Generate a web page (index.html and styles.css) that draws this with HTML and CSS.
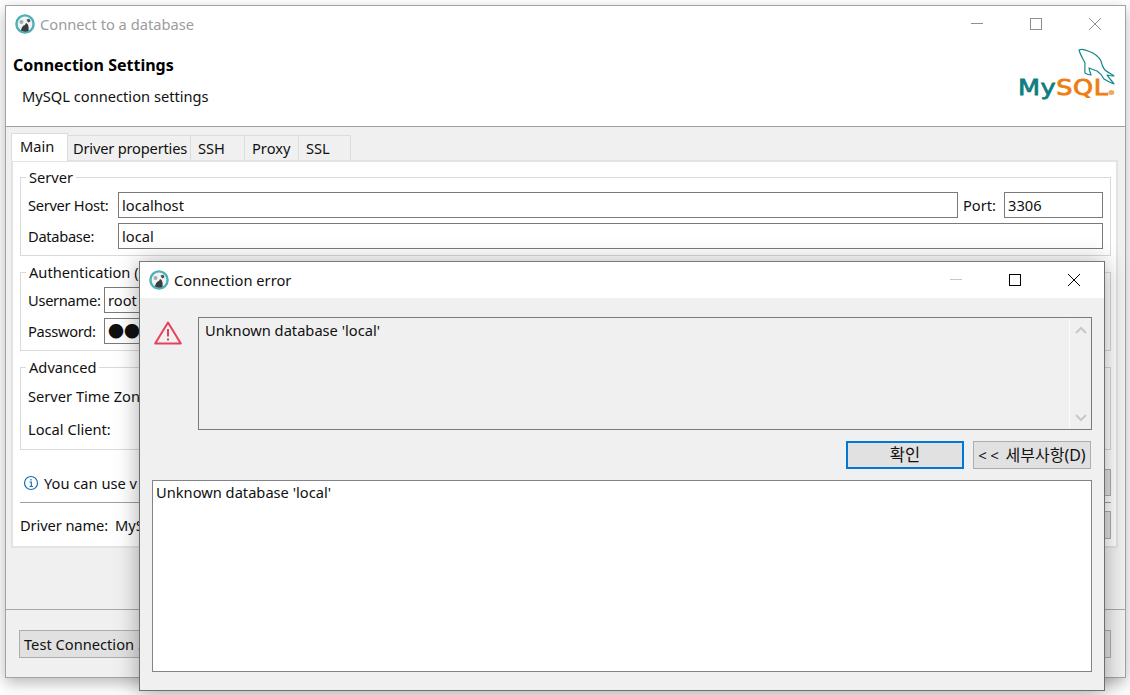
FILE: index.html
```html
<!DOCTYPE html>
<html lang="en">
<head>
<meta charset="utf-8">
<title>Connect to a database</title>
<link rel="stylesheet" href="styles.css">
</head>
<body>
<svg class="defs" width="0" height="0" aria-hidden="true">
  <symbol id="beaver" viewBox="0 0 20 20">
    <circle cx="10" cy="10" r="8.600" fill="#f2f4f4" stroke="#4fb0b8" stroke-width="2.400"/>
    <path d="M6 16.500 C6.500 13 8 11.500 10 11 C10.500 9.500 11 9 12 9.500 C13.500 11 14 13.500 13.500 17 C11 18 8 18 6 16.500Z" fill="#3a3d3e"/>
    <path d="M11.500 5.500L14.500 4.800L15.500 7.500L13 8.500Z" fill="#4a4e50"/>
    <circle cx="6.500" cy="8" r="2" fill="#a4adae"/>
  </symbol>
</svg>

<section class="window main-window">
  <header class="title-bar">
    <svg class="app-icon"><use href="#beaver"/></svg>
    <span class="title-text muted">Connect to a database</span>
    <div class="controls muted-controls">
      <span class="ctl"><svg width="12" height="12" viewBox="0 0 12 12"><path d="M0 5.500H12" /></svg></span>
      <span class="ctl"><svg width="12" height="12" viewBox="0 0 12 12"><rect x=".5" y=".5" width="11" height="11"/></svg></span>
      <span class="ctl"><svg width="12" height="12" viewBox="0 0 12 12"><path d="M0 0L12 12M12 0L0 12"/></svg></span>
    </div>
  </header>
  <div class="banner">
    <div class="banner-text">
      <h1>Connection Settings</h1>
      <p>MySQL connection settings</p>
    </div>
    <div class="logo">
      <svg class="dolphin" width="38" height="38" viewBox="0 0 38 38">
        <path d="M2 3 C5 1.500 8 2.500 11 4 C17 6 22 10 24 14 C25 18 26 21 28 23 C31 25.500 34 27 37 29 C35 29 32 28.500 30 28 C32 31 35 34 37 37 C33 35.500 30 34 27 32 C25 28 23 26 20 24 C17 23 14 22 12 21 C12.500 24 13.500 26 14 28 C12 28 10 27.500 8 26 C7.500 22 8 19 8 16 C6 12 3 7 2 3Z" fill="none" stroke="#12888a" stroke-width="1.200" stroke-linejoin="round"/>
      </svg>
      <div class="wordmark"><span class="my">My</span><span class="sql">SQL</span><i class="reg"></i></div>
    </div>
  </div>

  <div class="content">
    <nav class="tabs">
      <span class="tab active">Main</span>
      <span class="tab tab-driver">Driver properties</span>
      <span class="tab tab-ssh">SSH</span>
      <span class="tab tab-ssh">Proxy</span>
      <span class="tab tab-ssl">SSL</span>
    </nav>
    <div class="panel">
      <div class="group">
        <span class="legend">Server</span>
        <div class="row">
          <label class="lbl lbl-host">Server Host:</label>
          <div class="input grow">localhost</div>
          <label class="lbl-port">Port:</label>
          <div class="input port">3306</div>
        </div>
        <div class="row">
          <label class="lbl lbl-host">Database:</label>
          <div class="input grow">local</div>
        </div>
      </div>
      <div class="group">
        <span class="legend">Authentication (</span>
        <div class="row">
          <label class="lbl lbl-user">Username:</label>
          <div class="input grow">root</div>
        </div>
        <div class="row">
          <label class="lbl lbl-user">Password:</label>
          <div class="input grow dots">●●●●</div>
        </div>
      </div>
      <div class="group group-adv">
        <span class="legend">Advanced</span>
        <div class="row-plain">Server Time Zone:</div>
        <div class="row-plain">Local Client:</div>
      </div>
      <div class="info-row">
        <svg class="info-icon" width="16" height="16" viewBox="0 0 16 16"><circle cx="8" cy="8" r="6.500" fill="none" stroke="#1c6fb0" stroke-width="1.200"/><path d="M6.500 7H8.300V11.500M6.500 11.500H10M8 4V5.500" fill="none" stroke="#1c6fb0" stroke-width="1.200"/></svg>
        <span class="info-text">You can use v</span>
        <span class="btn side-btn">Connection details</span>
      </div>
      <div class="driver-row">
        <span class="driver-label">Driver name:</span>
        <span class="grow">MySQL</span>
        <span class="btn side-btn driver-btn">Driver Settings</span>
      </div>
    </div>
  </div>

  <footer class="footer">
    <span class="btn test-btn">Test Connection ...</span>
    <span class="btn cancel-btn">Cancel</span>
  </footer>
</section>

<section class="window dialog">
  <header class="dialog-title">
    <svg class="app-icon"><use href="#beaver"/></svg>
    <span class="title-text">Connection error</span>
    <div class="controls dialog-controls">
      <span class="ctl dim"><svg width="12" height="12" viewBox="0 0 12 12"><path d="M0 5.500H12"/></svg></span>
      <span class="ctl"><svg width="12" height="12" viewBox="0 0 12 12"><rect x=".5" y=".5" width="11" height="11"/></svg></span>
      <span class="ctl"><svg width="12" height="12" viewBox="0 0 12 12"><path d="M0 0L12 12M12 0L0 12"/></svg></span>
    </div>
  </header>
  <div class="dialog-body">
    <div class="message-row">
      <svg class="warn" width="28" height="24" viewBox="0 0 28 24">
        <path d="M14 1.500L26.800 22.500H1.200Z" fill="none" stroke="#e8405c" stroke-width="2" stroke-linejoin="round"/>
        <path d="M14 8V15.500M14 17.500V19.500" fill="none" stroke="#e8405c" stroke-width="2"/>
      </svg>
      <div class="message">
        <div class="message-text">Unknown database 'local'</div>
        <div class="scrollbar">
          <svg width="14" height="10" viewBox="0 0 14 10"><path d="M2 8L7 3L12 8" /></svg>
          <svg width="14" height="10" viewBox="0 0 14 10"><path d="M2 2L7 7L12 2" /></svg>
        </div>
      </div>
    </div>
    <div class="dialog-buttons">
      <span class="btn ok-btn">확인</span>
      <span class="btn details-btn"><span class="chev">&lt; &lt;</span>세부사항(D)</span>
    </div>
    <div class="details">Unknown database 'local'</div>
  </div>
</section>
</body>
</html>
```

FILE: styles.css
```css
* { box-sizing: border-box; }
html, body { margin: 0; height: 100%; }
body {
  background: #fff;
  font: 14.67px/20px "Noto Sans", "Noto Sans CJK KR", sans-serif;
  color: #111;
  overflow: hidden;
}
.defs { position: absolute; }
.window { position: absolute; display: flex; flex-direction: column; background: #f0f0f0; }

.main-window {
  left: 5px; top: 5px; width: 1121px; height: 673px;
  border: 1px solid #a3a3a3;
  box-shadow: 0 5px 14px rgba(0, 0, 0, .28);
}
.title-bar, .dialog-title { display: flex; align-items: center; background: #fff; flex: none; height: 36px; padding-left: 9px; }
.app-icon { width: 20px; height: 20px; flex: none; }
.title-text { margin-left: 5px; }
.muted { color: #9c9c9c; }
.controls { margin-left: auto; display: flex; }
.ctl { width: 59px; display: flex; justify-content: center; }
.ctl svg { fill: none; stroke: #000; stroke-width: 1; display: block; }
.muted-controls { margin-right: 1px; }
.muted-controls .ctl svg { stroke: #8f8f8f; }
.dialog-controls { margin-right: 1px; }
.ctl.dim svg { stroke: #c8c8c8; }

.banner {
  height: 85px; flex: none; display: flex; justify-content: space-between;
  background: #fff; border-bottom: 1px solid #a0a0a0;
}
.banner-text { padding-left: 7px; }
h1 { margin: 12px 0 0; font-size: 16px; line-height: 22px; font-weight: 700; color: #000; }
.banner-text p { margin: 9px 0 0 9px; line-height: 22px; }
.logo { width: 108px; margin-right: 10px; display: flex; flex-direction: column; align-items: flex-end; padding-top: 5px; }
.dolphin { flex: none; }
.wordmark {
  display: flex; align-items: baseline; align-self: flex-start; margin-top: -8px; margin-left: 11px;
  font: 400 22px/22px "DejaVu Sans", sans-serif; letter-spacing: .5px; -webkit-text-stroke: .8px currentColor;
  transform: scaleX(1.16); transform-origin: left center;
}
.my { color: #0f7d80; }
.sql { color: #ee7c0e; }
.reg { width: 5px; height: 5px; border-radius: 50%; background: #f2a860; margin-left: 0; flex: none; }

.content { flex: none; padding: 6px 7px 0 5px; }
.tabs { display: flex; align-items: flex-end; height: 27px; position: relative; z-index: 1; }
.tab {
  height: 25px; padding: 1px 0 0 7px;
  border: 1px solid #dcdcdc; border-left: 0; border-bottom: 0; background: #f0f0f0;
  line-height: 22px;
}
.tab.active { height: 28px; width: 57px; padding: 1px 0 0 8px; margin-bottom: -1px; background: #fff; border-left: 1px solid #dcdcdc; }
.tab-driver { width: 123px; padding-left: 5px; letter-spacing: -.2px; white-space: nowrap; }
.tab-ssh { width: 54px; }
.tab-ssl { width: 52px; }
.panel {
  height: 388px; background: #fff; border: 2px solid #e3e3e3;
  padding: 15px 5px 0 7px;
  display: flex; flex-direction: column;
}
.group {
  position: relative; height: 79px; margin-bottom: 16px; flex: none;
  border: 1px solid #d9d9d9; padding: 14px 7px 0 7px;
  display: flex; flex-direction: column; gap: 5px;
}
.legend { position: absolute; left: 5px; top: -11px; height: 20px; padding: 0 3px; background: #fff; white-space: nowrap; }
.row { display: flex; align-items: center; height: 26px; }
.lbl { flex: none; letter-spacing: -.3px; }
.lbl-host { width: 90px; }
.lbl-user { width: 76px; }
.lbl-port { flex: none; margin-left: 5px; width: 41px; }
.input { height: 26px; border: 1px solid #7a7a7a; background: #fff; padding: 2px 3px 0; line-height: 21px; }
.grow { flex: 1; }
.port { width: 99px; }
.dots { font-size: 16px; }
.group-adv { height: 83px; padding-top: 18px; gap: 13px; margin-bottom: 0; }
.row-plain { height: 20px; white-space: nowrap; }

.info-row { display: flex; align-items: center; height: 27px; margin-top: 19px; padding-left: 3px; flex: none; }
.info-icon { flex: none; margin-right: 5px; }
.info-text { flex: 1; }
.driver-row {
  display: flex; align-items: center; height: 37px; margin-top: 6px; padding-top: 8px;
  border-top: 1px solid #a0a0a0; flex: none;
}
.driver-label { width: 95px; letter-spacing: -.1px; }
.btn { display: flex; align-items: center; justify-content: center; height: 28px; flex: none; background: #e1e1e1; border: 1px solid #adadad; }
.side-btn { width: 160px; height: 27px; }
.driver-btn { height: 28px; padding-left: 13px; }

.footer {
  margin-top: auto; height: 68px; flex: none; border-top: 1px solid #a8a8a8;
  padding: 20px 14px 0 13px; display: flex; justify-content: space-between;
}
.test-btn { width: 130px; justify-content: flex-start; padding-left: 4px; white-space: nowrap; overflow: hidden; }
.cancel-btn { width: 100px; }

.dialog {
  left: 139px; top: 261px; width: 966px; height: 430px;
  border: 1px solid #6f6f6f; border-top-color: #7a7a7a;
  box-shadow: 0 2px 22px rgba(0, 0, 0, .34);
  z-index: 2;
}
.dialog-body { flex: 1; padding: 19px 12px 18px; display: flex; flex-direction: column; }
.message-row { display: flex; gap: 16px; height: 113px; flex: none; }
.warn { flex: none; margin: 4px 0 0 2px; }
.message { flex: 1; display: flex; border: 1px solid #7a7a7a; }
.message-text { flex: 1; padding: 2px 6px; }
.scrollbar {
  width: 22px; border-left: 1px solid #fafafa; display: flex; flex-direction: column;
  justify-content: space-between; align-items: center; padding: 7px 0 6px;
}
.scrollbar svg { fill: none; stroke: #c8c8c8; stroke-width: 2; display: block; }
.dialog-buttons { display: flex; justify-content: flex-end; gap: 9px; margin-top: 11px; height: 28px; flex: none; padding-right: 1px; }
.ok-btn { width: 118px; border: 2px solid #0078d7; font-size: 16.5px; }
.details-btn { width: 118px; white-space: nowrap; font-size: 16px; }
.chev { margin-right: 7px; font-size: 15px; letter-spacing: -.3px; }
.details { flex: 1; margin-top: 11px; background: #fff; border: 1px solid #82828a; padding: 1px 3px; }
```
